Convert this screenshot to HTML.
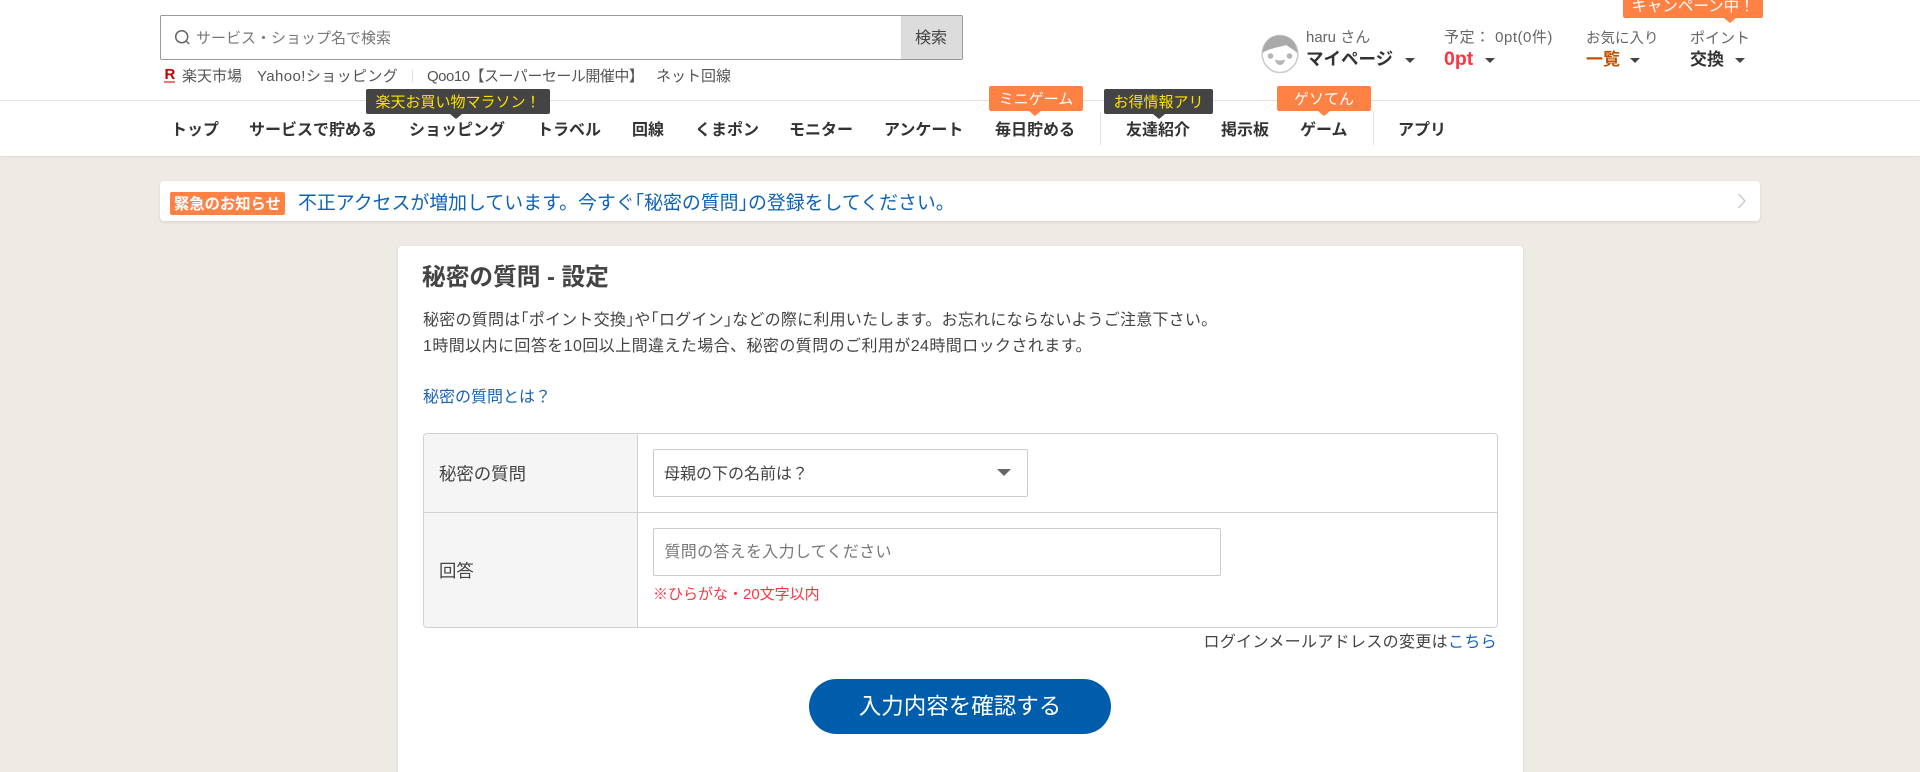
<!DOCTYPE html>
<html lang="ja"><head><meta charset="utf-8"><title>秘密の質問 - 設定</title>
<style>
html,body{margin:0;padding:0;width:1920px;height:772px;overflow:hidden;background:#edebe4}
body{position:relative;font-family:"Liberation Sans","Noto Sans CJK JP",sans-serif;color:#444}
.b{position:absolute;box-sizing:border-box}
.t{position:absolute;white-space:nowrap;line-height:24px;height:24px}
.nav{font-size:16px;font-weight:700;color:#333;top:119px}
.tip{position:absolute;box-sizing:border-box;height:25px;line-height:28px;text-align:center;font-size:15px;border-radius:2px;white-space:nowrap}
.tip:after{content:"";position:absolute;left:var(--a);bottom:-5px;margin-left:-6px;border-left:6px solid transparent;border-right:6px solid transparent;border-top:5px solid currentColor}
.dk{background:#444;color:#fbe000}.dk:after{border-top-color:#444}
.or{background:#ff8144;color:#fff}.or:after{border-top-color:#ff8144}
.car{position:absolute;width:0;height:0;border-left:5px solid transparent;border-right:5px solid transparent;border-top:5px solid #444}
.link{color:#1a62b8}
.h{font-feature-settings:"halt"}
</style></head><body>
<div class="b" style="left:0;top:0;width:1920px;height:156px;background:#fff;box-shadow:0 1px 2px rgba(0,0,0,.08)"></div>
<div class="b" style="left:0;top:100px;width:1920px;height:1px;background:#e2e2e2"></div>

<div class="b" style="left:160px;top:15px;width:803px;height:45px;border:1px solid #999;border-radius:2px;background:#fff"></div>
<div class="b" style="left:901px;top:16px;width:61px;height:43px;background:#dcdcdc"></div>
<svg class="b" style="left:174px;top:29px" width="18" height="18" viewBox="0 0 18 18" fill="none" stroke="#666" stroke-width="1.5"><circle cx="7.700" cy="7.700" r="6"/><path d="M12 12l3.200 3"/></svg>
<div class="t" style="left:196px;top:27px;font-size:15px;color:#777">サービス・ショップ名で検索</div>
<div class="t" style="left:915px;top:27px;font-size:16px;color:#444">検索</div>

<div class="t" style="left:164.500px;top:63px;font-size:15px;font-weight:700;color:#bf0000">R</div>
<div class="b" style="left:164px;top:81px;width:11px;height:1.500px;background:#e77"></div>
<div class="t" style="left:182px;top:65px;font-size:15px;color:#555">楽天市場</div>
<div class="t" style="left:257px;top:65px;font-size:15px;letter-spacing:.4px;color:#555">Yahoo!ショッピング</div>
<div class="b" style="left:412px;top:70px;width:1px;height:12px;background:#ddd"></div>
<div class="t" style="left:427px;top:65px;font-size:15px;letter-spacing:-.5px;color:#555">Qoo10【スーパーセール開催中】</div>
<div class="t" style="left:656px;top:65px;font-size:15px;color:#555">ネット回線</div>

<div class="t nav" style="left:171px">トップ</div>
<div class="t nav" style="left:249px">サービスで貯める</div>
<div class="t nav" style="left:409px">ショッピング</div>
<div class="t nav" style="left:537px">トラベル</div>
<div class="t nav" style="left:632px">回線</div>
<div class="t nav" style="left:695px">くまポン</div>
<div class="t nav" style="left:789px">モニター</div>
<div class="t nav" style="left:884px">アンケート</div>
<div class="t nav" style="left:995px">毎日貯める</div>
<div class="t nav" style="left:1126px">友達紹介</div>
<div class="t nav" style="left:1221px">掲示板</div>
<div class="t nav" style="left:1300px">ゲーム</div>
<div class="t nav" style="left:1398px">アプリ</div>
<div class="b" style="left:1100px;top:112px;width:1px;height:33px;background:#e2e2e2"></div>
<div class="b" style="left:1373px;top:112px;width:1px;height:33px;background:#e2e2e2"></div>

<div class="tip dk" style="left:366px;top:89px;width:184px;--a:90px">楽天お買い物マラソン！</div>
<div class="tip or" style="left:989px;top:86px;width:94px;--a:46px">ミニゲーム</div>
<div class="tip dk" style="left:1104px;top:89px;width:109px;--a:55px">お得情報アリ</div>
<div class="tip or" style="left:1277px;top:86px;width:94px;--a:47px">ゲソてん</div>
<div class="tip or" style="left:1623px;top:-7px;width:140px;--a:107px;font-size:15.500px">キャンペーン中！</div>

<svg class="b" style="left:1261px;top:34px" width="38" height="40" viewBox="0 0 38 40">
<ellipse cx="19" cy="20" rx="17.800" ry="18.500" fill="#fff" stroke="#ccc" stroke-width="1.6"/>
<path d="M1.500 19C2 8 9.500 1.500 19 1.500S36 8 36.500 19C33 16 28 13 25 11C20 13 8 14 1.500 19Z" fill="#aaa"/>
<circle cx="9.500" cy="22" r="2.800" fill="#b5b5b5"/><circle cx="28.500" cy="22" r="2.800" fill="#b5b5b5"/>
<path d="M14 25.500Q19 27.500 24 25.500Q23 31 19 31Q15 31 14 25.500Z" fill="#b5b5b5"/></svg>
<div class="t" style="left:1306px;top:26px;font-size:15px;color:#666">haru さん</div>
<div class="t" style="left:1306px;top:47px;font-size:17.500px;font-weight:700;color:#333">マイページ</div>
<div class="car" style="left:1405px;top:58px"></div>
<div class="t" style="left:1444px;top:26px;font-size:15px;letter-spacing:.5px;color:#666">予定： 0pt(0件)</div>
<div class="t" style="left:1444px;top:47px;font-size:19.500px;font-weight:700;color:#ff3340">0pt</div>
<div class="car" style="left:1485px;top:58px"></div>
<div class="t" style="left:1586px;top:27px;font-size:14.500px;color:#666">お気に入り</div>
<div class="t" style="left:1586px;top:48px;font-size:17px;font-weight:700;color:#bf5000">一覧</div>
<div class="car" style="left:1630px;top:58px"></div>
<div class="t" style="left:1690px;top:27px;font-size:15px;color:#666">ポイント</div>
<div class="t" style="left:1690px;top:48px;font-size:17px;font-weight:700;color:#333">交換</div>
<div class="car" style="left:1735px;top:58px"></div>

<div class="b" style="left:160px;top:181px;width:1600px;height:40px;background:#fff;border-radius:4px;box-shadow:0 1px 3px rgba(0,0,0,.1)"></div>
<div class="b" style="left:170px;top:192px;width:115px;height:23px;background:#ff8144;border-radius:2px"></div>
<div class="t" style="left:174px;top:192.500px;font-size:15.300px;font-weight:700;color:#fff">緊急のお知らせ</div>
<div class="t link" style="left:298px;top:192px;font-size:18.900px;color:#0f62b5">不正アクセスが増加しています。今すぐ<span class="h">「</span>秘密の質問<span class="h">」</span>の登録をしてください。</div>
<svg class="b" style="left:1736px;top:192px" width="12" height="18" viewBox="0 0 12 18" fill="none" stroke="#ccc" stroke-width="1.500"><path d="M2.500 2l6.500 7-6.500 7"/></svg>

<div class="b" style="left:398px;top:246px;width:1125px;height:540px;background:#fff;border-radius:4px;box-shadow:0 1px 3px rgba(0,0,0,.1)"></div>
<div class="t" style="left:422px;top:265px;font-size:23.700px;line-height:26px;height:26px;font-weight:700;color:#444">秘密の質問 - 設定</div>
<div class="t" style="left:423px;top:309px;font-size:16px;letter-spacing:.24px">秘密の質問は<span class="h">「</span>ポイント交換<span class="h">」</span>や<span class="h">「</span>ログイン<span class="h">」</span>などの際に利用いたします。お忘れにならないようご注意下さい。</div>
<div class="t" style="left:423px;top:334.500px;font-size:16px;letter-spacing:.42px">1時間以内に回答を10回以上間違えた場合、秘密の質問のご利用が24時間ロックされます。</div>
<div class="t link" style="left:423px;top:386px;font-size:16px">秘密の質問とは？</div>

<div class="b" style="left:423px;top:433px;width:1075px;height:195px;border:1px solid #d0d0d0;border-radius:4px;background:#fff;overflow:hidden">
<div class="b" style="left:0;top:0;width:213px;height:193px;background:#f5f5f5"></div>
<div class="b" style="left:213px;top:0;width:1px;height:193px;background:#d0d0d0"></div>
<div class="b" style="left:0;top:78px;width:1073px;height:1px;background:#d0d0d0"></div>
</div>
<div class="t" style="left:439px;top:462px;font-size:17.400px">秘密の質問</div>
<div class="t" style="left:439px;top:559px;font-size:17.400px">回答</div>
<div class="b" style="left:653px;top:449px;width:375px;height:48px;border:1px solid #ccc;border-radius:2px;background:#fff"></div>
<div class="t" style="left:664px;top:463px;font-size:16px">母親の下の名前は？</div>
<div class="b" style="left:997px;top:469px;width:0;height:0;border-left:7.500px solid transparent;border-right:7.500px solid transparent;border-top:7.500px solid #666"></div>
<div class="b" style="left:653px;top:528px;width:568px;height:48px;border:1px solid #ccc;border-radius:2px;background:#fff"></div>
<div class="t" style="left:664.500px;top:541px;font-size:16px;letter-spacing:.3px;color:#777">質問の答えを入力してください</div>
<div class="t" style="left:653px;top:583px;font-size:15px;color:#ff3340">※ひらがな・20文字以内</div>
<div class="t" style="right:423px;top:631px;font-size:16px;letter-spacing:.33px">ログインメールアドレスの変更は<span class="link">こちら</span></div>

<div class="b" style="left:809px;top:679px;width:302px;height:55px;border-radius:28px;background:#005dab"></div>
<div class="t" style="left:809px;width:302px;text-align:center;top:692px;font-size:22.500px;line-height:30px;height:30px;color:#fff">入力内容を確認する</div>
</body></html>
